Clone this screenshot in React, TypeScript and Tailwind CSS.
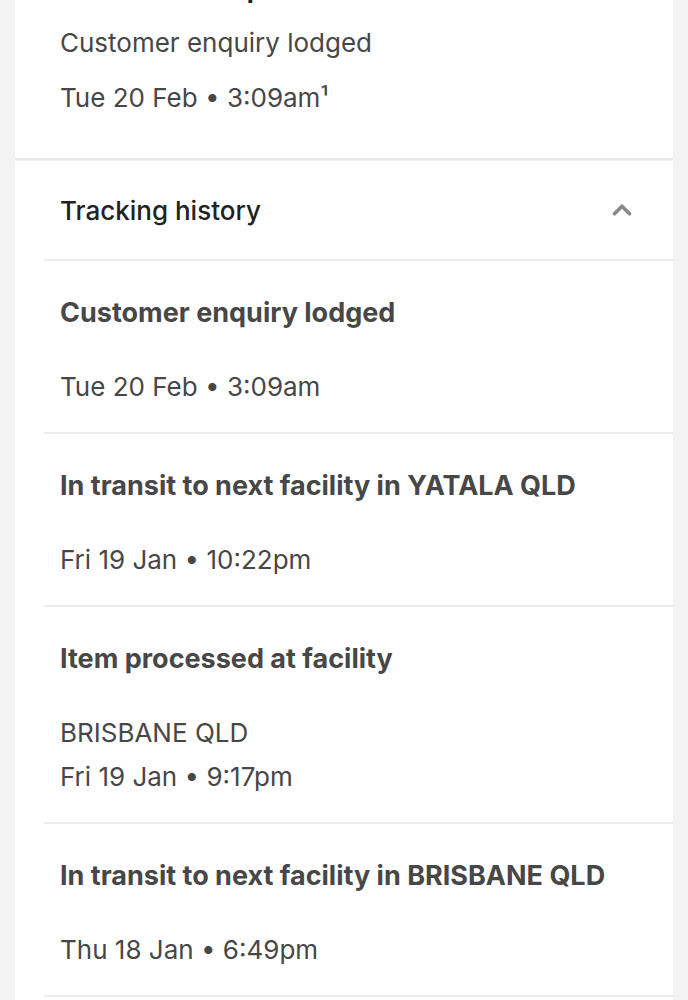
import { ChevronUp } from 'lucide-react';

interface TrackEvent {
  title: string; location?: string; when: string;
}

const events: TrackEvent[] = [
  { title: 'Customer enquiry lodged', when: 'Tue 20 Feb • 3:09am' },
  { title: 'In transit to next facility in YATALA QLD', when: 'Fri 19 Jan • 10:22pm' },
  { title: 'Item processed at facility', location: 'BRISBANE QLD', when: 'Fri 19 Jan • 9:17pm' },
  { title: 'In transit to next facility in BRISBANE QLD', when: 'Thu 18 Jan • 6:49pm' },
];

export default function App() {
  return (
    <div className="min-h-screen bg-[#f3f3f3] px-[15px] overflow-hidden font-['Inter',sans-serif] text-[#474747]">
      {/* latest update card, heading scrolled off the top */}
      <div className="bg-white -mt-[27px] pl-[45px] pr-6 pb-[38px] border-b-2 border-[#e8e8e8]">
        <h2 className="text-[26px] leading-[32px] font-bold text-[#222]">Latest status update</h2>
        <p className="mt-4 text-[26px] leading-[44px]">Customer enquiry lodged</p>
        <p className="mt-[11px] text-[26px] leading-[44px]">Tue 20 Feb • 3:09am¹</p>
      </div>

      <div className="bg-white mt-[1px]">
        <div className="h-[98px] pl-[45px] pr-[36px] flex items-center justify-between">
          <span className="text-[26px] font-medium text-[#222]">Tracking history</span>
          <ChevronUp size={30} strokeWidth={3} className="text-[#8a8a8a]" />
        </div>
        {events.map((ev, i) => (
          <div key={i} className="ml-[29px] border-t-2 border-[#ececec] pl-4 pr-6 pt-[36px] pb-[23px]">
            <div className="text-[27px] leading-[32px] font-bold text-[#474747]">{ev.title}</div>
            <div className="mt-[36px] text-[26px] leading-[44px]">
              {ev.location && <div>{ev.location}</div>}
              <div>{ev.when}</div>
            </div>
          </div>
        ))}
        <div className="ml-[29px] border-t-2 border-[#ececec] h-10" />
      </div>
    </div>
  );
}
